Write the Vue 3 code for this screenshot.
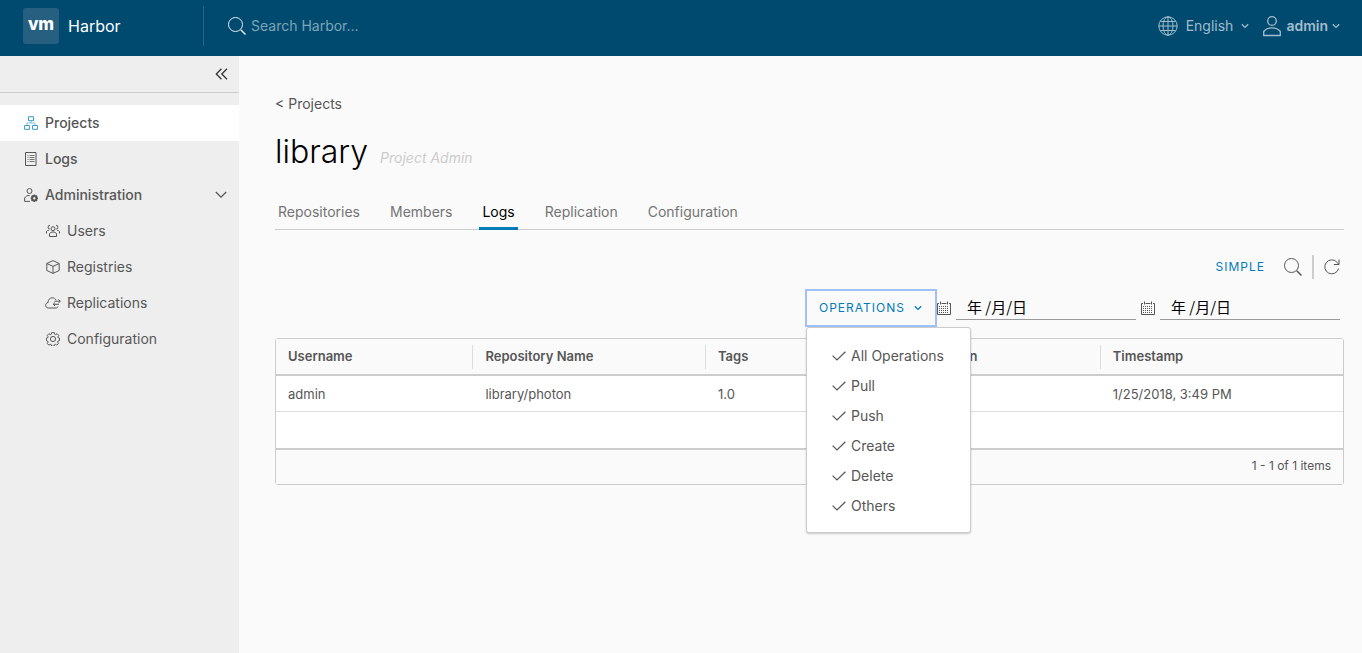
<script setup>
import { ref } from 'vue'

const search = ref('')
const fromDate = ref('年 /月/日')
const toDate = ref('年 /月/日')
const menuOpen = ref(true)
const adminLinks = ['Users', 'Registries', 'Replications', 'Configuration']
const tabs = ['Repositories', 'Members', 'Logs', 'Replication', 'Configuration']
const operations = ['All Operations', 'Pull', 'Push', 'Create', 'Delete', 'Others']
const columns = ['Username', 'Repository Name', 'Tags', 'Operation', 'Timestamp']
const rows = [['admin', 'library/photon', '1.0', 'pull', '1/25/2018, 3:49 PM']]
</script>

<template>
  <div class="app">
    <header class="header">
      <a href="#" class="brand">
        <span class="logo">vm</span>
        <span class="title">Harbor</span>
      </a>
      <label class="search">
        <svg width="20" height="20" viewBox="0 0 20 20" class="line">
          <circle cx="8.5" cy="8.5" r="7" /><path d="M13.7 13.7l4.8 4.8" stroke-width="1.5" />
        </svg>
        <input v-model="search" type="text" placeholder="Search Harbor..." aria-label="Search Harbor" />
      </label>
      <button class="head-btn language">
        <svg width="20" height="20" viewBox="0 0 20 20" class="line">
          <circle cx="10" cy="10" r="9.2" /><ellipse cx="10" cy="10" rx="5" ry="9.2" />
          <path d="M10 .8v18.4M.8 10h18.4M2.3 5.5h15.4M2.3 14.5h15.4" />
        </svg>
        <span>English</span>
        <svg width="8" height="6" viewBox="0 0 8 6" class="line"><path d="M.8 1.2L4 4.4l3.200-3.200" stroke-width="1.300" /></svg>
      </button>
      <button class="head-btn user">
        <svg width="20" height="22" viewBox="0 0 20 22" class="line">
          <circle cx="10" cy="6" r="4.300" stroke-width="1.300" />
          <path d="M1.700 20.500v-4c1.800-2.400 4.700-3.700 8.300-3.700s6.500 1.300 8.300 3.700v4z" stroke-width="1.300" />
        </svg>
        <span>admin</span>
        <svg width="8" height="6" viewBox="0 0 8 6" class="line"><path d="M.8 1.200L4 4.400l3.200-3.200" stroke-width="1.300" /></svg>
      </button>
    </header>

    <div class="body">
      <nav class="sidebar">
        <div class="collapse">
          <button aria-label="Collapse navigation">
            <svg width="14" height="12" viewBox="0 0 14 12" class="line"><path d="M7.500.8L2.300 6l5.200 5.200M13 .8L7.800 6l5.200 5.200" stroke-width="1.300" /></svg>
          </button>
        </div>
        <a href="#" class="nav-item active">
          <svg width="14" height="14" viewBox="0 0 14 14" class="line blue">
            <path d="M4.500.7h5v4h-5zM.6 9.500h4.800v3.800H.6zM8.600 9.500h4.800v3.800H8.600z" />
            <path class="thin" d="M7 5v2M3 9V7h8v2" />
          </svg>
          Projects
        </a>
        <a href="#" class="nav-item">
          <svg width="14" height="14" viewBox="0 0 14 14" class="line">
            <path d="M1.500.5h10.500v13H1.500z" />
            <path class="rows" d="M3.500 3.500h1M5.500 3.500h5M3.500 5.500h1M5.500 5.500h5M3.500 7.500h1M5.500 7.500h5M3.500 9.500h1M5.500 9.500h5" />
          </svg>
          Logs
        </a>
        <a href="#" class="nav-item">
          <svg width="14" height="14" viewBox="0 0 14 14" class="line">
            <circle cx="5.500" cy="3" r="2.500" /><path d="M6 13.400H.6V10c1-1.700 2.700-2.600 5-2.600" />
            <circle cx="10.300" cy="10.200" r="2.200" stroke-width="2" />
            <path d="M10.300 6.500v1.500M10.300 12.500v1.500M6.700 10.200h1.500M12.400 10.200h1.600M7.700 7.600l1 1M12 11.900l1 1M12.900 7.600l-1 1M8.600 11.900l-1 1" stroke-width="1.500" />
          </svg>
          Administration
          <svg width="12" height="8" viewBox="0 0 12 8" class="line caret"><path d="M.8 1L6 6.200 11.200 1" stroke-width="1.300" /></svg>
        </a>
        <a v-for="link in adminLinks" :key="link" href="#" class="nav-item child">
          <svg v-if="link === 'Users'" width="14" height="14" viewBox="0 0 14 14" class="line">
            <circle cx="7" cy="4.700" r="2" /><path d="M3.500 12.500V9.700C4.300 8.500 5.500 8 7 8s2.700.5 3.500 1.700v2.800z" />
            <path d="M4 1.300A1.800 1.800 0 1 0 3.800 5M10 1.300A1.800 1.800 0 1 1 10.200 5M.5 9.500V7.600c.5-.8 1.200-1.300 2.500-1.500M13.500 9.500V7.600c-.5-.8-1.200-1.300-2.500-1.500" />
          </svg>
          <svg v-else-if="link === 'Registries'" width="14" height="14" viewBox="0 0 14 14" class="line">
            <path d="M7 .6l6.200 2.900v7L7 13.400.8 10.500v-7zM.8 3.500L7 6.400l6.200-2.900M7 6.400v7" />
          </svg>
          <svg v-else-if="link === 'Replications'" width="16" height="14" viewBox="0 0 16 14" class="line wide">
            <path d="M13 10.500c-.3.900-1 1.500-2 1.500H3.500C1.800 12 .6 10.800.6 9.300c0-1.400 1-2.500 2.400-2.700C3 3.700 4.900 1.800 7.200 1.800c1.800 0 3 .8 3.800 2.200" />
            <path d="M9.500 5.200h5.700M13.500 3.500l1.800 1.700-1.800 1.700M14 8.300H8.300M10 6.600L8.200 8.300 10 10" />
          </svg>
          <svg v-else width="14" height="14" viewBox="0 0 14 14" class="line">
            <circle cx="7" cy="7" r="2.600" />
            <path d="M5.700.6h2.600l.4 1.600 1 .4 1.400-.9 1.700 1.800-.9 1.400.4 1 1.200.3v2.400l-1.500.5-.4 1 .8 1.300-1.700 1.700-1.300-.8-1 .4-.4 1.500H5.700l-.4-1.500-1-.4-1.400.8-1.700-1.700.9-1.300-.4-1-1.300-.5V6.100l1.300-.3.400-1-.9-1.300 1.700-1.800 1.400.9 1-.4z" />
          </svg>
          {{ link }}
        </a>
      </nav>

      <main class="main">
        <a href="#" class="back">&lt; Projects</a>
        <div class="heading">
          <h1>library</h1>
          <em>Project Admin</em>
        </div>
        <nav class="tabs">
          <a v-for="tab in tabs" :key="tab" href="#" :class="{ current: tab === 'Logs' }">{{ tab }}</a>
        </nav>

        <div class="toolbar">
          <button class="text-btn">SIMPLE</button>
          <button class="icon-btn" aria-label="Search logs">
            <svg width="20" height="20" viewBox="0 0 20 20" class="line"><circle cx="8.500" cy="8.500" r="7" /><path d="M13.700 13.700l4.800 4.800" stroke-width="1.500" /></svg>
          </button>
          <span class="divider"></span>
          <button class="icon-btn" aria-label="Refresh">
            <svg width="16" height="16" viewBox="0 0 16 16" class="line"><path d="M14.600 9.500A7 7 0 1 1 13.300 3.500l1.500 1.800M15 .5v5H9.800" /></svg>
          </button>
        </div>

        <div class="filters">
          <div class="dropdown">
            <button class="text-btn toggle" :aria-expanded="menuOpen" @click="menuOpen = !menuOpen">
              OPERATIONS
              <svg width="8" height="6" viewBox="0 0 8 6" class="line"><path d="M.8 1.200L4 4.400l3.200-3.200" stroke-width="1.300" /></svg>
            </button>
            <div v-if="menuOpen" class="menu">
              <button v-for="op in operations" :key="op">
                <svg width="14" height="10" viewBox="0 0 14 10" class="line"><path d="M.6 4.600l4.400 4.400L13.400.7" stroke-width="1.200" /></svg>
                {{ op }}
              </button>
            </div>
          </div>
          <label class="date">
            <svg width="14" height="14" viewBox="0 0 14 14" class="line">
              <path d="M2 2.500H.5v11h13v-11H12M4.500 2.500h5M3.500.5v3M10.500.5v3" />
              <path d="M2.500 5v7M4.500 5v7M6.500 5v7M8.500 5v7M10.500 5v7" stroke-dasharray="1 1" />
            </svg>
            <input v-model="fromDate" type="text" aria-label="From date" />
          </label>
          <label class="date">
            <svg width="14" height="14" viewBox="0 0 14 14" class="line">
              <path d="M2 2.500H.5v11h13v-11H12M4.500 2.500h5M3.500.5v3M10.500.5v3" />
              <path d="M2.500 5v7M4.500 5v7M6.500 5v7M8.500 5v7M10.500 5v7" stroke-dasharray="1 1" />
            </svg>
            <input v-model="toDate" type="text" aria-label="To date" />
          </label>
        </div>

        <div class="datagrid">
          <table>
            <thead>
              <tr><th v-for="col in columns" :key="col"><span>{{ col }}</span></th></tr>
            </thead>
            <tbody>
              <tr v-for="row in rows" :key="row[0]"><td v-for="cell in row" :key="cell">{{ cell }}</td></tr>
            </tbody>
          </table>
          <div class="spacer"></div>
          <footer>1 - 1 of 1 items</footer>
        </div>
      </main>
    </div>
  </div>
</template>

<style>
body {
  margin: 0;
  background: #fafafa;
}
</style>

<style scoped>
* {
  box-sizing: border-box;
}
.app {
  display: flex;
  flex-direction: column;
  min-height: 100vh;
  font-family: Inter, "Noto Sans CJK SC", sans-serif;
  font-size: 14px;
  line-height: 24px;
  color: #565656;
}
a {
  color: inherit;
  text-decoration: none;
}
button {
  display: flex;
  align-items: center;
  border: 0;
  padding: 0;
  background: none;
  color: inherit;
  font: inherit;
}
svg {
  flex: none;
}
.line {
  fill: none;
  stroke: currentColor;
}
.header {
  display: flex;
  align-items: center;
  height: 56px;
  padding: 0 22px 4px 0;
  background: #004a70;
  color: #a3bccb;
}
.brand {
  display: flex;
  align-items: center;
  gap: 9px;
  width: 204px;
  height: 40px;
  padding-left: 23px;
  border-right: 1px solid #26658a;
  color: #fff;
}
.logo {
  width: 36px;
  height: 36px;
  border-radius: 3px;
  background: #265f80;
  font-size: 17px;
  font-weight: 800;
  line-height: 33px;
  text-align: center;
}
.title {
  font-size: 16px;
  line-height: 22px;
}
.search {
  display: flex;
  align-items: center;
  flex: 1;
  gap: 4px;
  padding-left: 23px;
}
.search svg {
  color: #e4edf2;
}
.search input {
  width: 240px;
  border: 0;
  padding: 0;
  outline: 0;
  background: none;
  color: #fff;
  font: inherit;
}
.search input::placeholder {
  color: #7fa4b7;
  opacity: 1;
}
.head-btn {
  gap: 8px;
}
.user {
  gap: 4px;
  margin-left: 13px;
  font-weight: 600;
}
.body {
  display: flex;
  flex: 1;
}
.sidebar {
  flex: none;
  width: 239px;
  background: #eee;
}
.collapse {
  display: flex;
  align-items: center;
  justify-content: flex-end;
  height: 37px;
  margin-bottom: 12px;
  padding-right: 11px;
  border-bottom: 1px solid #ccc;
  color: #333;
}
.nav-item {
  display: flex;
  align-items: center;
  gap: 7px;
  height: 36px;
  padding: 0 12px 0 24px;
  font-weight: 500;
}
.child {
  padding-left: 46px;
  font-weight: 400;
}
.wide {
  margin: 0 -1px;
}
.active {
  background: #fff;
}
.blue {
  color: #3a97c9;
}
.thin {
  opacity: 0.6;
}
.rows {
  opacity: 0.8;
}
.caret {
  margin-left: auto;
}
.main {
  flex: 1;
  min-width: 0;
  padding: 36px 18px 24px 36px;
}
.back {
  display: block;
}
.heading {
  display: flex;
  align-items: baseline;
  gap: 12px;
  height: 48px;
  margin-top: 12px;
}
h1 {
  margin: 0;
  color: #000;
  font-size: 32px;
  font-weight: 300;
  line-height: 48px;
}
.heading em {
  color: #ccc;
}
.tabs {
  display: flex;
  gap: 24px;
  height: 36px;
  margin-top: 18px;
  border-bottom: 1px solid #ccc;
}
.tabs a {
  height: 36px;
  padding: 6px 3px 0;
  color: #747474;
}
.tabs .current {
  border-bottom: 3px solid #007cbb;
  color: #000;
}
.toolbar {
  display: flex;
  align-items: center;
  justify-content: flex-end;
  height: 36px;
  margin-top: 19px;
  padding-right: 4px;
}
.text-btn {
  color: #007cbb;
  font-size: 12px;
  letter-spacing: 1px;
}
.icon-btn {
  margin-left: 18px;
}
.divider {
  width: 2px;
  height: 24px;
  margin-left: 9px;
  background: #ccc;
}
.divider + .icon-btn {
  margin-left: 10px;
}
.filters {
  display: flex;
  align-items: center;
  justify-content: flex-end;
  gap: 5px;
  height: 36px;
  margin-top: 5px;
  padding-right: 4px;
}
.dropdown {
  position: relative;
  margin-right: -4px;
}
.toggle {
  justify-content: space-between;
  width: 130px;
  height: 36px;
  padding: 0 14px 0 13px;
  outline: 2px solid #a0c0f8;
  outline-offset: -1px;
}
.menu {
  position: absolute;
  z-index: 1;
  top: 37px;
  left: 0;
  width: 165px;
  padding: 13px 0 11px;
  border: 1px solid #ccc;
  border-radius: 3px;
  background: #fff;
  box-shadow: 0 1px 2px rgba(0, 0, 0, 0.2);
}
.menu button {
  gap: 5px;
  width: 100%;
  height: 30px;
  padding-left: 25px;
}
.date {
  display: flex;
  align-items: center;
  gap: 5px;
}
.date input {
  width: 180px;
  height: 24px;
  border: 0;
  border-bottom: 1px solid #9a9a9a;
  padding: 0 11px 2px;
  outline: 0;
  background: none;
  color: #000;
  font-family: "Noto Sans CJK SC", sans-serif;
  font-size: 15px;
}
.datagrid {
  margin-top: 12px;
  border: 1px solid #ccc;
  border-radius: 3px;
  background: #fff;
  font-size: 13px;
}
table {
  width: 100%;
  border-collapse: separate;
  border-spacing: 0;
  table-layout: fixed;
}
th,
td {
  padding: 0 0 0 12px;
  text-align: left;
}
th {
  width: 18.5%;
  height: 37px;
  border-bottom: 2px solid #ccc;
  background: #fafafa;
  font-weight: 600;
}
th:nth-child(2) {
  width: 21.8%;
}
th:last-child {
  width: auto;
}
th span {
  display: block;
  border-right: 1px solid #ddd;
  line-height: 22px;
  padding-bottom: 2px;
}
th:last-child span {
  border-right: 0;
}
td {
  height: 36px;
  border-bottom: 1px solid #ddd;
}
.spacer {
  height: 36px;
}
footer {
  height: 36px;
  padding-right: 12px;
  border-top: 2px solid #ccc;
  background: #fafafa;
  font-size: 12px;
  line-height: 32px;
  text-align: right;
}
</style>
